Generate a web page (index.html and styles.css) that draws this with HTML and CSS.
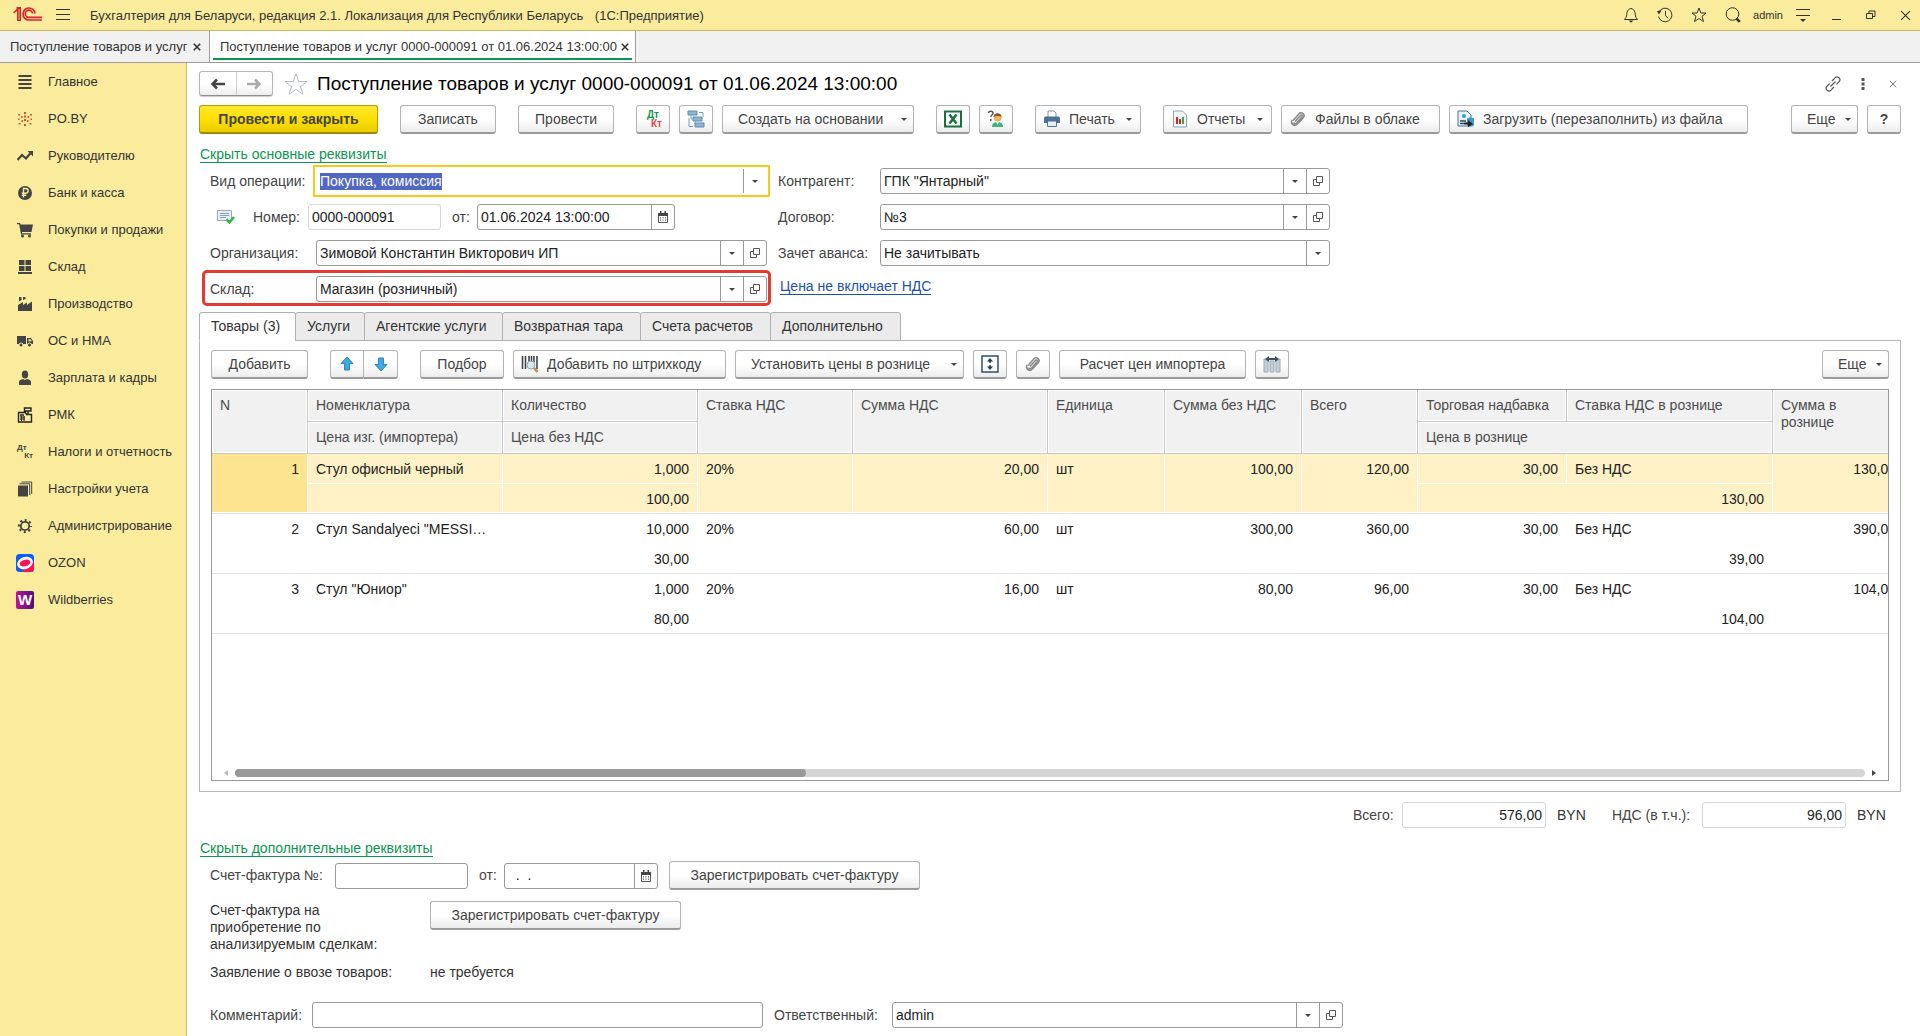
FILE: index.html
```html
<!DOCTYPE html>
<html lang="ru">
<head>
<meta charset="utf-8">
<title>Поступление товаров и услуг</title>
<link rel="stylesheet" href="styles.css">
</head>
<body>
<svg class="defs" aria-hidden="true">
  <symbol id="i-clip" viewBox="0 0 18 18"><path d="M4 10.500 10 3.800a2.900 2.900 0 0 1 4.300 3.900L8.200 14.300a3.300 3.300 0 0 1-4.900-4.400M6 11.500l5.500-6M4.500 12.500c.8 1.800 2.400 1.200 3.200.3l5.200-5.800c1.200-1.400-.3-2.800-1.500-1.500L6.300 11" fill="none" stroke="#8a8a8a" stroke-width="1.500"/></symbol>
  <symbol id="i-open" viewBox="0 0 12 12"><path d="M4.500 1.500h6v6h-6zM4.500 4.500h-3v6h6v-3" fill="none" stroke="#555"/></symbol>
  <symbol id="i-cal" viewBox="0 0 12 12"><path d="M1.500 2.500h9v9h-9z" fill="#fff" stroke="#555"/><path d="M1 2h10v3H1zM3 0h1.500v2H3zM7.500 0H9v2H7.500z" fill="#444"/><path d="M3 6.800h1M5.500 6.800h1M8 6.800h1M3 9.200h1M5.500 9.200h1M8 9.200h1" stroke="#555" stroke-width="1.200"/></symbol>
  <symbol id="i-x" viewBox="0 0 10 10"><path d="M1 1l8 8M9 1L1 9" fill="none" stroke="currentColor"/></symbol>
</svg>

<header class="topbar">
  <svg class="logo" viewBox="0 0 30 16"><path d="M0 5.500 3.500 2V0H8v14H4V4L1 6.500zM6 2v12" fill="#d8232a"/><path d="M6 2v11" stroke="#f7d27a" stroke-width=".8"/><path d="M22 6.500A6 6 0 1 0 16 13h13M19.500 6.500A3.600 3.600 0 1 0 16 10.300h13" fill="none" stroke="#d8232a" stroke-width="1.700"/></svg>
  <button class="ico-btn menu-btn" aria-label="Меню"><svg width="14" height="12" viewBox="0 0 14 12"><path d="M0 .5h14M0 5.500h14M0 10.500h14" stroke="#333"/></svg></button>
  <div class="app-title">Бухгалтерия для Беларуси, редакция 2.1. Локализация для Республики Беларусь <span class="app-kind">(1С:Предприятие)</span></div>
  <div class="sys">
    <button class="ico-btn" aria-label="Оповещения"><svg width="16" height="16" viewBox="0 0 16 16"><path d="M1.500 12.500C4 10 3.500 8 4 5.500S6 2 8 1.500c2 .5 3.500 1.500 4 4s0 4.500 2.500 7z" fill="none" stroke="#333"/><path d="M5.500 13.500h5L8 15.800z" fill="#333"/></svg></button>
    <button class="ico-btn" aria-label="История"><svg width="16" height="16" viewBox="0 0 16 16"><path d="M2 5a6.800 6.800 0 1 1-.5 4.500M8.500 4v4.500l2.500 2.800" fill="none" stroke="#333"/><path d="M0 4l4.500-.5L2 7.500z" fill="#333"/></svg></button>
    <button class="ico-btn" aria-label="Избранное"><svg width="16" height="16" viewBox="0 0 16 16"><path d="M8 1l1.900 5H15l-4 3.300 1.500 5.200L8 11.500l-4.500 3L5 9.300 1 6h5.100z" fill="none" stroke="#333"/></svg></button>
    <button class="ico-btn" aria-label="Поиск"><svg width="16" height="16" viewBox="0 0 16 16"><circle cx="7.500" cy="7" r="6.300" fill="none" stroke="#333"/><path d="M11.500 11.500l3.300 3.300" stroke="#333" stroke-width="2.500"/></svg></button>
    <span class="user">admin</span>
    <button class="ico-btn" aria-label="Сервис"><svg width="14" height="14" viewBox="0 0 14 14"><path d="M0 1.500h14M0 7.500h14" stroke="#333"/><path d="M4 11h6l-3 3z" fill="#333"/></svg></button>
    <button class="ico-btn" aria-label="Свернуть"><svg width="10" height="12" viewBox="0 0 10 12"><path d="M0 10.500h9" stroke="#333"/></svg></button>
    <button class="ico-btn" aria-label="Развернуть"><svg width="10" height="10" viewBox="0 0 10 10"><path d="M.5 3.500h6v5h-6zM3 3V1h6v5.500H7" fill="none" stroke="#333"/></svg></button>
    <button class="ico-btn" aria-label="Закрыть"><svg width="11" height="11"><use href="#i-x"/></svg></button>
  </div>
</header>

<nav class="windows">
  <div class="wtab"><a href="#">Поступление товаров и услуг</a><button class="tab-x" aria-label="Закрыть вкладку"><svg width="8" height="8"><use href="#i-x"/></svg></button></div>
  <div class="wtab wtab-active"><a href="#">Поступление товаров и услуг 0000-000091 от 01.06.2024 13:00:00</a><button class="tab-x" aria-label="Закрыть вкладку"><svg width="8" height="8"><use href="#i-x"/></svg></button></div>
</nav>

<div class="body">
<aside class="side">
  <a href="#"><svg viewBox="0 0 16 16"><path d="M1.500 2h13M1.500 6h13M1.500 10h13M1.500 14h13" stroke="#444" stroke-width="2"/></svg>Главное</a>
  <a href="#"><svg viewBox="0 0 16 16"><path d="M7 1h2v2H7zM7 4.500h2v2H7zM7 8h2v2H7zM7 13h2v2H7zM1 3h2v1.500H1zM13 3h2v1.500h-2zM4 5h1.500v2H4zM10.500 5H12v2h-1.500zM1 7.500h1.500V9H1zM13.500 7.500H15V9h-1.500zM4.500 9H6v2H4.500zM10 9h1.500v2H10zM1.500 12h2v1.500h-2zM12.500 12h2v1.500h-2z" fill="#d9532c"/></svg>PO.BY</a>
  <a href="#"><svg viewBox="0 0 16 16"><path d="M.5 12 5 7l4 3.500 5-6" fill="none" stroke="#444" stroke-width="2.200"/><path d="M10.500 3H16v5.500z" fill="#444"/></svg>Руководителю</a>
  <a href="#"><svg viewBox="0 0 16 16"><circle cx="8" cy="8" r="7" fill="#444"/><path d="M6.500 12.500v-9h2.300a2.300 2.300 0 0 1 0 4.700H4.800M4.800 10.300h4.500" fill="none" stroke="#f9ec9f" stroke-width="1.400"/></svg>Банк и касса</a>
  <a href="#"><svg viewBox="0 0 16 16"><path d="M0 1h3l.7 1.500H16L14.500 10H5l.3 1.300H14V12.500H4L2.200 2.300H0z" fill="#444"/><circle cx="5.500" cy="14" r="1.500" fill="#444"/><circle cx="12.500" cy="14" r="1.500" fill="#444"/></svg>Покупки и продажи</a>
  <a href="#"><svg viewBox="0 0 16 16"><path d="M2 1h5.500v5H2zM8.500 1H14v5H8.500zM2 7h5.500v5H2zM8.500 7H14v5H8.500zM1 13h14v2H1z" fill="#444"/></svg>Склад</a>
  <a href="#"><svg viewBox="0 0 16 16"><path d="M1 15V9l5-3v3l4-2.500V9l5-3.500V15zM2 1h2.500v3L2 5.500zM6 1h2.500v2L6 4z" fill="#444"/></svg>Производство</a>
  <a href="#"><svg viewBox="0 0 16 16"><path d="M0 3h9v8H0zM10 5h4l2 3v3h-6z" fill="#444"/><path d="M11.500 6.200h2L15 8.300h-3.500z" fill="#f9ec9f"/><g fill="#444" stroke="#f9ec9f"><circle cx="4" cy="12" r="2"/><circle cx="12.500" cy="12" r="2"/></g></svg>ОС и НМА</a>
  <a href="#"><svg viewBox="0 0 16 16"><ellipse cx="8" cy="4.500" rx="3.200" ry="4" fill="#444"/><path d="M2 15v-3c0-2 2-2.500 4-3l2 1 2-1c2 .5 4 1 4 3v3z" fill="#444"/></svg>Зарплата и кадры</a>
  <a href="#"><svg viewBox="0 0 16 16"><path d="M1.500 5.500h7l1 2h5v7.500h-13zM7.500 1h6.500v3H7.500zM11 4v3M3 8h4" fill="none" stroke="#222" stroke-width="1.400"/><path d="M3 10h5M3 12h5M4.500 9v5M7 9v5" stroke="#222"/></svg>РМК</a>
  <a href="#"><span class="dk"><b>Дт</b><b>Кт</b></span>Налоги и отчетность</a>
  <a href="#"><svg viewBox="0 0 16 16"><path d="M1 4.500h10v11H1z" fill="#444"/><path d="M2.500 2.800h10.200V14M4.500 1h10.200v12" fill="none" stroke="#444"/></svg>Настройки учета</a>
  <a href="#"><svg viewBox="0 0 16 16"><circle cx="8" cy="8" r="4.200" fill="none" stroke="#444" stroke-width="1.800"/><circle cx="8" cy="8" r="6" fill="none" stroke="#444" stroke-width="2.200" stroke-dasharray="2 2.710" stroke-dashoffset="1"/></svg>Администрирование</a>
  <a href="#"><svg class="brand" viewBox="0 0 18 18"><rect width="18" height="18" rx="3.500" fill="#0a5cff"/><path d="M18 8v7a3 3 0 0 1-3 3H5z" fill="#f91155"/><ellipse cx="9" cy="9" rx="8" ry="6" transform="rotate(-20 9 9)" fill="#fff"/><ellipse cx="9" cy="9" rx="5.500" ry="3.200" transform="rotate(-15 9 9)" fill="#f91155"/></svg>OZON</a>
  <a href="#"><span class="brand wb">W</span>Wildberries</a>
</aside>

<main class="doc">
  <div class="doc-head">
    <div class="nav-pair">
      <button aria-label="Назад"><svg width="16" height="12" viewBox="0 0 16 12"><path d="M15 6H3M7 1.500 2.500 6 7 10.500" fill="none" stroke="#444" stroke-width="2.500"/></svg></button>
      <button aria-label="Вперед"><svg width="16" height="12" viewBox="0 0 16 12"><path d="M1 6h12M9 1.500 13.500 6 9 10.500" fill="none" stroke="#aaa" stroke-width="2.500"/></svg></button>
    </div>
    <svg class="fav" viewBox="0 0 24 22"><path d="M12 1l2.700 7.500H23l-6.500 5 2.400 7.700-6.900-4.700-6.900 4.700 2.400-7.700L1 8.500h8.300z" fill="none" stroke="#b4bac2"/></svg>
    <h1>Поступление товаров и услуг 0000-000091 от 01.06.2024 13:00:00</h1>
    <div class="head-tools">
      <button class="plain" aria-label="Ссылка"><svg width="16" height="16" viewBox="0 0 16 16"><path d="M7 5l3-3.200c2.500-2.500 6.500 1 4.200 3.700L11.500 8.300M9 11l-3 3.200C3.500 16.700-.5 13.200 1.800 10.500L4.500 7.700M5.500 10.500l5-5" fill="none" stroke="#555" stroke-width="1.200"/></svg></button>
      <button class="plain" aria-label="Еще"><svg width="4" height="12" viewBox="0 0 4 12"><path d="M.5 0h3v3h-3zM.5 4.500h3v3h-3zM.5 9h3v3h-3z" fill="#555"/></svg></button>
      <button class="plain" aria-label="Закрыть"><svg width="8" height="8"><use href="#i-x"/></svg></button>
    </div>
  </div>

  <div class="bar bar-main">
    <button class="btn btn-primary">Провести и закрыть</button>
    <button class="btn w-m">Записать</button>
    <button class="btn w-m">Провести</button>
    <div class="grp">
      <button class="btn sq" aria-label="Дт Кт"><span class="dk dk-color"><b>Дт</b><b>Кт</b></span></button>
      <button class="btn sq" aria-label="Структура"><svg width="18" height="18" viewBox="0 0 18 18"><path d="M1 1h9v4H1zM6 7h9v4H6zM8 13h9v4H8z" fill="#8fb4d2" stroke="#5d8cb3"/><path d="M12 2.500h4v4M2 8v8.500h4M4 5v4h2M8 11v3" fill="none" stroke="#6f9bc0"/></svg></button>
      <button class="btn drop w-create">Создать на основании<i class="caret"></i></button>
    </div>
    <div class="grp">
      <button class="btn sq" aria-label="Excel"><svg width="18" height="18" viewBox="0 0 18 18"><path d="M1 1.500h16v15H1z" fill="#fff" stroke="#17703f" stroke-width="2"/><path d="M5.500 4.500l7 9M12.500 4.500l-7 9" stroke="#17703f" stroke-width="2.500"/></svg></button>
      <button class="btn sq" aria-label="Помощь"><svg width="18" height="18" viewBox="0 0 18 18"><path d="M1.500 3c0-2.500 4.500-2.500 4.500 0S3.800 4.500 3.800 7M3.800 9v2" fill="none" stroke="#555" stroke-width="1.500"/><path d="M5 17c0-4 2.500-5 5.500-5s5.500 1 5.500 5z" fill="#3cb57c"/><circle cx="10.500" cy="7.500" r="4" fill="#efb35c"/><path d="M6.500 7c0-5 8-5 8 0-2-1.500-6-1.500-8 0z" fill="#7a5a34"/><path d="M9 12h3l-1.500 3z" fill="#fff"/></svg></button>
    </div>
    <button class="btn pic w-print"><svg width="18" height="18" viewBox="0 0 18 18"><path d="M5 1h6l2 2v5H5z" fill="#fff" stroke="#7d93a8"/><path d="M1 8.500C1 7 2 6.500 3 6.500h12c1 0 2 .5 2 2V13H1z" fill="#4c7196"/><path d="M4.500 11h9v5.500h-9z" fill="#e8eef4" stroke="#4c7196"/></svg>Печать<i class="caret"></i></button>
    <div class="grp">
      <button class="btn pic w-report"><svg width="18" height="18" viewBox="0 0 18 18"><path d="M2.500 1h9l4 4v12h-13z" fill="#f2f6fa" stroke="#8ea3b8"/><path d="M6 7v7M9 9v5" stroke="#d22" stroke-width="2"/><path d="M12 7v7" stroke="#3a4" stroke-width="2"/></svg>Отчеты<i class="caret"></i></button>
      <button class="btn pic w-files"><svg width="18" height="18"><use href="#i-clip"/></svg>Файлы в облаке</button>
      <button class="btn pic w-load"><svg width="18" height="18" viewBox="0 0 18 18"><path d="M1 1h9l4 4v11H1z" fill="#eaf2f9" stroke="#46739b"/><circle cx="7" cy="6" r="2" fill="#27a1dc"/><path d="M3 11h6M3 13.500h4" stroke="#345" stroke-width="1.500"/><path d="M10 9c0-2 7-2 7 0v6c0 2-7 2-7 0z" fill="#3f97cf"/><path d="M7 12.500h4V10l5 4-5 3v-2.500H7z" fill="#222"/></svg>Загрузить (перезаполнить) из файла</button>
    </div>
    <div class="grp push">
      <button class="btn drop w-more">Еще<i class="caret"></i></button>
      <button class="btn sq"><b>?</b></button>
    </div>
  </div>

  <a class="toggle" href="#">Скрыть основные реквизиты</a>

  <div class="form">
    <div class="row">
      <label class="lb-l" for="op">Вид операции:</label>
      <div class="field focus"><input id="op" type="text" value="Покупка, комиссия" autofocus><button aria-label="Выбрать"><i class="caret"></i></button></div>
    </div>
    <div class="row">
      <label class="lb-r" for="contr">Контрагент:</label>
      <div class="field"><input id="contr" type="text" value="ГПК &quot;Янтарный&quot;"><button aria-label="Выбрать"><i class="caret"></i></button><button aria-label="Открыть"><svg width="12" height="12"><use href="#i-open"/></svg></button></div>
    </div>
    <div class="row">
      <svg class="posted" viewBox="0 0 18 16"><path d="M.5 1.500h14v10H.5z" fill="#e4ecf4" stroke="#9aabbd"/><path d="M3 4.500h9M3 6.500h9M3 8.500h6" stroke="#8fa0b2"/><path d="M9.500 10.500l3 3L17 8" fill="none" stroke="#35b44a" stroke-width="2.500"/></svg>
      <label class="lb-num" for="num">Номер:</label>
      <div class="field ro num"><input id="num" type="text" value="0000-000091" readonly></div>
      <label class="lb-from" for="date">от:</label>
      <div class="field date"><input id="date" type="text" value="01.06.2024 13:00:00"><button aria-label="Календарь"><svg width="12" height="12"><use href="#i-cal"/></svg></button></div>
    </div>
    <div class="row">
      <label class="lb-r" for="dog">Договор:</label>
      <div class="field"><input id="dog" type="text" value="№3"><button aria-label="Выбрать"><i class="caret"></i></button><button aria-label="Открыть"><svg width="12" height="12"><use href="#i-open"/></svg></button></div>
    </div>
    <div class="row">
      <label class="lb-l" for="org">Организация:</label>
      <div class="field"><input id="org" type="text" value="Зимовой Константин Викторович ИП"><button aria-label="Выбрать"><i class="caret"></i></button><button aria-label="Открыть"><svg width="12" height="12"><use href="#i-open"/></svg></button></div>
    </div>
    <div class="row">
      <label class="lb-r" for="avans">Зачет аванса:</label>
      <div class="field"><input id="avans" type="text" value="Не зачитывать"><button aria-label="Выбрать"><i class="caret"></i></button></div>
    </div>
    <div class="row marked">
      <label class="lb-l" for="store">Склад:</label>
      <div class="field"><input id="store" type="text" value="Магазин (розничный)"><button aria-label="Выбрать"><i class="caret"></i></button><button aria-label="Открыть"><svg width="12" height="12"><use href="#i-open"/></svg></button></div>
    </div>
    <div class="row price"><a class="price-link" href="#">Цена не включает НДС</a></div>
  </div>

  <div class="tabs" role="tablist">
    <button role="tab" class="tab t-s on">Товары (3)</button>
    <button role="tab" class="tab t-xs">Услуги</button>
    <button role="tab" class="tab t-l">Агентские услуги</button>
    <button role="tab" class="tab t-l">Возвратная тара</button>
    <button role="tab" class="tab t-m">Счета расчетов</button>
    <button role="tab" class="tab t-m">Дополнительно</button>
  </div>

  <section class="panel">
    <div class="bar bar-table">
      <button class="btn w-m">Добавить</button>
      <div class="pair">
        <button class="btn sq" aria-label="Вверх"><svg width="14" height="16" viewBox="0 0 14 16"><path d="M7 1l6 6.500H9.500V14h-5V7.500H1z" fill="#3fa9e6" stroke="#2a86bd"/></svg></button>
        <button class="btn sq" aria-label="Вниз"><svg width="14" height="16" viewBox="0 0 14 16"><path d="M7 15l6-6.500H9.500V2h-5v6.500H1z" fill="#3fa9e6" stroke="#2a86bd"/></svg></button>
      </div>
      <div class="grp">
        <button class="btn w-pick">Подбор</button>
        <button class="btn pic w-bar"><svg width="18" height="18" viewBox="0 0 18 18"><path d="M1.500 1v13M4.500 1v13M8 1v8M10.500 1v6M13 1v6M16 1v13" stroke="#444" stroke-width="1.600"/><circle cx="10" cy="10" r="4" fill="#d5e6f3" stroke="#8fa6ba"/><path d="M13 13l3.500 4" stroke="#c98d4d" stroke-width="2.500"/></svg>Добавить по штрихкоду</button>
        <button class="btn drop w-setprice">Установить цены в рознице<i class="caret"></i></button>
        <button class="btn sq" aria-label="Высота строк"><svg width="18" height="18" viewBox="0 0 18 18"><path d="M1 1h16v16H1z" fill="#fff" stroke="#2d4f6d" stroke-width="1.500"/><path d="M9 5v8" stroke="#1f3a54" stroke-width="1.500" stroke-dasharray="3 2"/><path d="M9 3l3 3.500H6zM9 15l3-3.500H6z" fill="#1f3a54"/></svg></button>
        <button class="btn sq" aria-label="Файлы"><svg width="18" height="18"><use href="#i-clip"/></svg></button>
        <button class="btn w-calc">Расчет цен импортера</button>
        <button class="btn sq" aria-label="Ширина колонок"><svg width="18" height="18" viewBox="0 0 18 18"><path d="M1 4h4v13H1zM7 6h4v11H7zM13 4h4v13h-4z" fill="#c5ced6" stroke="#9aa7b3"/><path d="M2 4l4-3v2h6V1l4 3-4 3V5H6v2z" fill="#3c5366"/></svg></button>
      </div>
      <button class="btn drop w-more push">Еще<i class="caret"></i></button>
    </div>

    <div class="grid">
      <table>
        <colgroup><col class="c1"><col class="c2"><col class="c2"><col class="c3"><col class="c2"><col class="c4"><col class="c5"><col class="c6"><col class="c7"><col class="c8"><col class="c9"></colgroup>
        <thead>
          <tr><th rowspan="2">N</th><th>Номенклатура</th><th>Количество</th><th rowspan="2">Ставка НДС</th><th rowspan="2">Сумма НДС</th><th rowspan="2">Единица</th><th rowspan="2">Сумма без НДС</th><th rowspan="2">Всего</th><th>Торговая надбавка</th><th>Ставка НДС в рознице</th><th rowspan="2">Сумма в<br>рознице</th></tr>
          <tr><th>Цена изг. (импортера)</th><th>Цена без НДС</th><th colspan="2">Цена в рознице</th></tr>
        </thead>
        <tbody class="sel">
          <tr><td class="n r" rowspan="2">1</td><td>Стул офисный черный</td><td class="r">1,000</td><td rowspan="2">20%</td><td class="r" rowspan="2">20,00</td><td rowspan="2">шт</td><td class="r" rowspan="2">100,00</td><td class="r" rowspan="2">120,00</td><td class="r">30,00</td><td>Без НДС</td><td class="r" rowspan="2">130,00</td></tr>
          <tr><td></td><td class="r">100,00</td><td class="r" colspan="2">130,00</td></tr>
        </tbody>
        <tbody>
          <tr><td class="r" rowspan="2">2</td><td>Стул Sandalyeci "MESSI…</td><td class="r">10,000</td><td rowspan="2">20%</td><td class="r" rowspan="2">60,00</td><td rowspan="2">шт</td><td class="r" rowspan="2">300,00</td><td class="r" rowspan="2">360,00</td><td class="r">30,00</td><td>Без НДС</td><td class="r" rowspan="2">390,00</td></tr>
          <tr><td></td><td class="r">30,00</td><td class="r" colspan="2">39,00</td></tr>
        </tbody>
        <tbody>
          <tr><td class="r" rowspan="2">3</td><td>Стул "Юниор"</td><td class="r">1,000</td><td rowspan="2">20%</td><td class="r" rowspan="2">16,00</td><td rowspan="2">шт</td><td class="r" rowspan="2">80,00</td><td class="r" rowspan="2">96,00</td><td class="r">30,00</td><td>Без НДС</td><td class="r" rowspan="2">104,00</td></tr>
          <tr><td></td><td class="r">80,00</td><td class="r" colspan="2">104,00</td></tr>
        </tbody>
      </table>
      <div class="hscroll"><i class="arr-l"></i><div class="track"><div class="thumb"></div></div><i class="arr-r"></i></div>
    </div>
  </section>

  <div class="totals">
    <label class="lb-tot" for="tot">Всего:</label><div class="field ro"><input id="tot" type="text" value="576,00" readonly></div><span class="cur">BYN</span>
    <label class="lb-vat" for="vat">НДС (в т.ч.):</label><div class="field ro"><input id="vat" type="text" value="96,00" readonly></div><span class="cur">BYN</span>
  </div>

  <a class="toggle" href="#">Скрыть дополнительные реквизиты</a>

  <div class="row extra">
    <label class="lb-inv" for="inv">Счет-фактура №:</label>
    <div class="field inv"><input id="inv" type="text"></div>
    <label class="lb-from" for="invd">от:</label>
    <div class="field invd"><input id="invd" type="text" value="  .  ."><button aria-label="Календарь"><svg width="12" height="12"><use href="#i-cal"/></svg></button></div>
    <button class="btn w-reg">Зарегистрировать счет-фактуру</button>
  </div>
  <div class="row extra top">
    <span class="lb-wide">Счет-фактура на<br>приобретение по<br>анализируемым сделкам:</span>
    <button class="btn w-reg">Зарегистрировать счет-фактуру</button>
  </div>
  <div class="row extra decl">
    <span class="lb-wide">Заявление о ввозе товаров:</span><span>не требуется</span>
  </div>
  <div class="row extra last">
    <label class="lb-com" for="com">Комментарий:</label>
    <div class="field com"><input id="com" type="text"></div>
    <label class="lb-resp" for="resp">Ответственный:</label>
    <div class="field resp"><input id="resp" type="text" value="admin"><button aria-label="Выбрать"><i class="caret"></i></button><button aria-label="Открыть"><svg width="12" height="12"><use href="#i-open"/></svg></button></div>
  </div>
</main>
</div>
<script src="app.js"></script>
</body>
</html>
```

FILE: styles.css
```css
*{box-sizing:border-box}
body{margin:0;min-height:100vh;display:flex;flex-direction:column;background:#fff;color:#333;font:14px/17px "Liberation Sans",Arial,sans-serif}
button,input{font:inherit;color:inherit;margin:0}
button{padding:0;border:0;background:none;display:flex;align-items:center;justify-content:center;white-space:nowrap}
svg{display:block;flex:none}
a{color:inherit;text-decoration:none}
.defs{position:absolute;width:0;height:0}

/* window header */
.topbar{height:31px;display:flex;align-items:center;padding-left:13px;background:#faeb9d;border-bottom:1px solid #c9b85f;font-size:13px}
.logo{width:30px;height:16px}
.menu-btn{margin-left:5px}
.ico-btn{width:30px;height:30px;color:#333}
.app-title{margin-left:12px;white-space:nowrap}
.app-kind{margin-left:8px}
.sys{margin-left:auto;display:flex;align-items:center;gap:4px}
.user{width:32px;text-align:center;font-size:11px}

.windows{height:32px;display:flex;background:#f1f1f1;border-bottom:1px solid #9d9d9d;font-size:13px}
.wtab{position:relative;display:flex;align-items:center;justify-content:space-between;width:210px;padding:0 7px 0 10px;border-right:1px solid #9d9d9d;white-space:nowrap}
.wtab-active{width:426px;padding-right:5px;background:#fff}
.wtab-active::after{content:"";position:absolute;left:3px;right:3px;bottom:2px;height:2px;background:#0a9650}
.tab-x{width:10px;height:16px}
.tab-x svg{stroke-width:2}

/* section list */
.body{flex:1;display:flex}
.side{flex:none;width:187px;background:#faeb9d;border-right:1px solid #cdbd6a;font-size:13px}
.side a{display:flex;align-items:center;gap:15px;height:37px;padding-left:17px;white-space:nowrap}
.side svg{width:16px;height:16px}
.side svg.brand,.wb{width:18px;height:18px;margin:0 -1px;flex:none}
.wb{border-radius:2px;background:linear-gradient(90deg,#c0149c,#481173);color:#fff;font:bold 15px/18px "Liberation Sans",Arial,sans-serif;text-align:center}
.dk{width:16px;height:16px;display:flex;flex-direction:column;font-size:8px;line-height:8px;color:#444}
.dk b:last-child{align-self:flex-end}
.dk-color{width:18px;height:18px;font-size:10px;line-height:9px}
.dk-color b:first-child{color:#12954c}
.dk-color b:last-child{color:#e0494b}

/* document */
.doc{flex:1;min-width:0;padding:0 19px 8px 12px}
.doc-head{display:flex;align-items:center;height:41px}
.nav-pair{display:flex;width:74px;height:25px;border:1px solid #b5b5b5;border-bottom-color:#8f8f8f;border-radius:3px;box-shadow:0 1px 1px #ccc;background:linear-gradient(#fff 50%,#eee)}
.nav-pair button{flex:1}
.nav-pair button+button{border-left:1px solid #ccc}
.fav{width:24px;height:22px;margin-left:11px}
h1{margin:0 0 0 9px;font-weight:400;font-size:19px;line-height:24px;color:#000;white-space:nowrap}
.head-tools{margin-left:auto;display:flex;gap:14px}
.plain{width:16px;height:16px;color:#555}

.bar{display:flex}
.bar-main{gap:22px;padding-top:1px}
.grp{display:flex;gap:9px}
.push{margin-left:auto}
.btn{height:29px;border:1px solid #b3b3b3;border-bottom:2px solid #9a9a9a;border-radius:3px;background:linear-gradient(#fff 50%,#ececec);color:#444;flex:none}
.caret{width:0;height:0;border:3px solid transparent;border-top-color:#444;border-bottom:0}
.btn .caret{margin-left:auto}
.drop{justify-content:flex-start;padding:0 6px 0 15px}
.pic{justify-content:flex-start;padding:0 8px 0 7px}
.pic svg{margin-right:8px}
.btn-primary{width:179px;border-color:#b39b00;border-bottom-color:#9a8600;background:linear-gradient(#ffe833,#ffdf00 50%,#e9cd00);font-weight:700}
.sq{width:34px}
.w-m{width:97px}
.bar-main .w-m{width:96px}
.w-create{width:192px}
.w-print{width:106px}
.w-report{width:109px}
.w-files{width:159px}
.w-load{width:299px}
.w-more{width:67px}

.toggle{display:table;margin:12px 0 0 1px;line-height:16px;color:#0a9650;border-bottom:1px solid #0a9650}

.form{display:grid;grid-template-columns:minmax(0,557px) minmax(0,552px);column-gap:11px;row-gap:10px;margin:5px 0 10px 11px}
.row{position:relative;display:flex;align-items:center;height:26px;color:#444}
.row label,.row span{flex:none}
.lb-l{width:106px}
.lb-r{width:102px}
.posted{width:18px;height:16px;margin:0 18px 0 7px}
.lb-num{width:55px}
.lb-from{width:18px;margin:0 7px 0 11px}
.price{align-items:flex-start}
.price-link{margin:2px 0 0 2px;line-height:16px;color:#1c52b0;border-bottom:1px solid #1c52b0}
.marked::before{content:"";position:absolute;inset:-6px -4px -4px -8px;border:3px solid #e8392e;border-radius:5px;pointer-events:none}

.field{flex:1;min-width:0;display:flex;height:26px;border:1px solid #999;border-radius:3px;background:#fff;color:#222}
.field input{flex:1;min-width:0;width:0;padding:0 3px;border:0;outline:0;background:none}
.field button{flex:none;width:23px;border-left:1px solid #999}
.field.ro{border-color:#d6d6d6}
.field.focus{border-color:transparent;border-radius:0;outline:2px solid #fac91e;outline-offset:1px}
.field input::selection{background:#5067c4;color:#fff}
.num{flex:0 0 133px}
.date{flex:0 0 198px}

/* tabs and table */
.tabs{display:flex;position:relative;margin-bottom:-1px}
.tab{height:29px;padding:0 11px;margin-left:-1px;border:1px solid #b0b0b0;border-radius:3px 3px 0 0;background:#ebebeb;color:#333;justify-content:flex-start}
.tab:first-child{margin-left:0}
.tab.on{background:#fff;border-bottom-color:#fff}
.t-xs{width:70px}
.t-s{width:97px}
.t-m{width:131px}
.t-l{width:139px}
.panel{border:1px solid #b5b5b5;padding:9px 11px 10px}
.bar-table{gap:22px}
.pair{display:flex}
.pair .btn:first-child{border-radius:3px 0 0 3px}
.pair .btn+.btn{border-left:0;border-radius:0 3px 3px 0}
.w-pick{width:84px}
.w-bar{width:213px}
.w-setprice{width:229px}
.w-calc{width:187px}
.grid{display:flex;flex-direction:column;min-height:392px;margin-top:10px;border:1px solid #999;overflow:hidden}
table{flex:none;width:1693px;table-layout:fixed;border-collapse:separate;border-spacing:0}
.c1{width:96px}.c2{width:195px}.c3{width:155px}.c4{width:117px}.c5{width:137px}.c6{width:116px}.c7{width:149px}.c8{width:206px}.c9{width:132px}
th,td{padding:7px 8px 0;vertical-align:top;font-weight:400;text-align:left;white-space:nowrap;overflow:hidden}
th{height:32px;background:#f1f1f1;color:#4c4c4c;border-right:1px solid #c6c6c6;border-bottom:1px solid #c6c6c6;box-shadow:inset 1px 1px #fff,inset -1px -1px #fff}
td{height:30px;color:#222}
td.r{text-align:right;padding-right:9px}
tbody td[rowspan],tbody tr+tr td{border-bottom:1px solid #e2e2e2}
.sel td{background:#fdf1c5;border-right:1px solid #fff;box-shadow:inset 0 -1px #fff}
.sel td.r{padding-right:8px}
.sel .n{background:#fde490}
.hscroll{display:flex;align-items:center;gap:7px;height:8px;margin:auto 9px 3px}
.track{flex:1;height:8px;border-radius:4px;background:#d5d5d5}
.thumb{width:35%;height:8px;border-radius:4px;background:#999}
.arr-l,.arr-r{width:7px;border:3px solid transparent}
.arr-l{border-right:4px solid #bbb;border-left:0}
.arr-r{border-left:4px solid #444;border-right:0}

.totals{display:flex;justify-content:flex-end;align-items:center;margin-top:10px;height:26px;color:#444}
.totals .field{flex:0 0 144px;margin-right:11px}
.totals input{text-align:right}
.lb-tot{width:49px}
.lb-vat{width:90px}
.cur{width:55px;color:#333}
.cur:last-child{width:44px}
.totals+.toggle{margin-top:12px}

.extra{height:29px;margin:4px 0 0 11px}
.lb-inv{width:125px}
.inv{flex:0 0 133px}
.invd{flex:0 0 154px;margin-right:11px}
.invd input{white-space:pre}
.w-reg{width:251px}
.lb-wide{width:220px;color:#333}
.top{height:auto;margin-top:11px;align-items:flex-start}
.top .lb-wide{padding-top:1px}
.decl{color:#333}
.decl,.last{height:26px}
.decl{margin-top:6px}
.last{margin-top:17px}
.lb-com{width:102px}
.com{flex:0 1 451px}
.lb-resp{width:129px;padding-left:11px}
.resp{flex:0 1 451px}
```

FILE: app.js
```js
document.getElementById('op').focus();
document.getElementById('op').select();
```
